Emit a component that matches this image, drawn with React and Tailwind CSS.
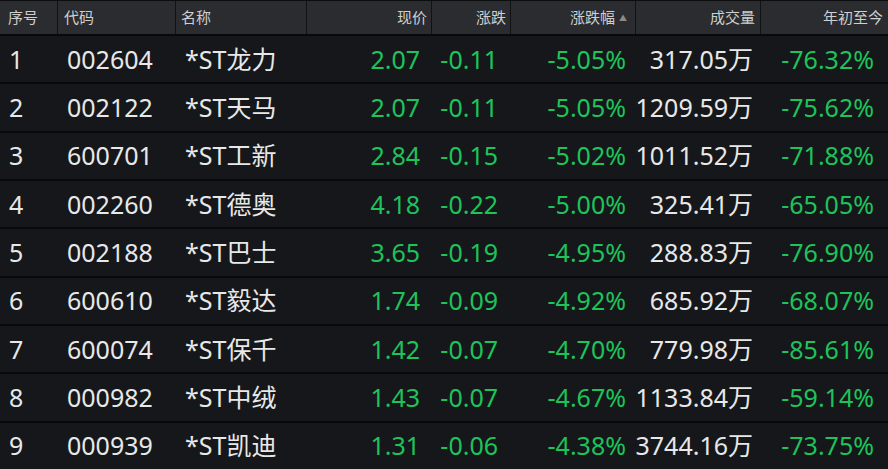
const rows = [
  ["1", "002604", "*ST龙力", "2.07", "-0.11", "-5.05%", "317.05万", "-76.32%"],
  ["2", "002122", "*ST天马", "2.07", "-0.11", "-5.05%", "1209.59万", "-75.62%"],
  ["3", "600701", "*ST工新", "2.84", "-0.15", "-5.02%", "1011.52万", "-71.88%"],
  ["4", "002260", "*ST德奥", "4.18", "-0.22", "-5.00%", "325.41万", "-65.05%"],
  ["5", "002188", "*ST巴士", "3.65", "-0.19", "-4.95%", "288.83万", "-76.90%"],
  ["6", "600610", "*ST毅达", "1.74", "-0.09", "-4.92%", "685.92万", "-68.07%"],
  ["7", "600074", "*ST保千", "1.42", "-0.07", "-4.70%", "779.98万", "-85.61%"],
  ["8", "000982", "*ST中绒", "1.43", "-0.07", "-4.67%", "1133.84万", "-59.14%"],
  ["9", "000939", "*ST凯迪", "1.31", "-0.06", "-4.38%", "3744.16万", "-73.75%"],
]

const font = { fontFamily: '"Noto Sans", "Noto Sans CJK SC", sans-serif' }

export default function App() {
  return (
    <div
      className="w-[888px] h-[469px] bg-[#15171b] flex flex-col overflow-hidden whitespace-nowrap"
      style={font}
    >
      <div className="h-[34px] shrink-0 flex bg-[#2a2c30] border-t border-[#0c0d0f] text-[15px] text-[#cfcfcf]">
        <div className="w-[58px] flex items-center pl-2 border-r border-[#111214]">序号</div>
        <div className="w-[118px] flex items-center pl-[6px] border-r border-[#111214]">代码</div>
        <div className="w-[131px] flex items-center pl-[5px] border-r border-[#111214]">名称</div>
        <div className="w-[125px] flex items-center justify-end pr-1 border-r border-[#111214]">现价</div>
        <div className="w-[79px] flex items-center justify-end pr-1 border-r border-[#111214]">涨跌</div>
        <div className="w-[125px] flex items-center justify-end pr-[8px] gap-[4px] border-r border-[#111214]">
          涨跌幅
          <span className="text-[8px] text-[#8a8a8a]">▲</span>
        </div>
        <div className="w-[125px] flex items-center justify-end pr-[5px] border-r border-[#111214]">成交量</div>
        <div className="flex-1 flex items-center justify-end pr-[5px]">年初至今</div>
      </div>
      {rows.map((r) => (
        <div key={r[0]} className="flex-1 flex border-t-2 border-[#08090a] text-[25px] text-[#e8e8e8] leading-none">
          <div className="w-[58px] flex items-center pl-[9px]">{r[0]}</div>
          <div className="w-[118px] flex items-center pl-[9px]">{r[1]}</div>
          <div className="w-[131px] flex items-center pl-[9px]">{r[2]}</div>
          <div className="w-[125px] flex items-center justify-end pr-[12px] text-[#1ec35a]">{r[3]}</div>
          <div className="w-[79px] flex items-center justify-end pr-[13px] text-[#1ec35a]">{r[4]}</div>
          <div className="w-[125px] flex items-center justify-end pr-[10px] text-[#1ec35a]">{r[5]}</div>
          <div className="w-[125px] flex items-center justify-end pr-[8px]">{r[6]}</div>
          <div className="flex-1 flex items-center justify-end pr-[14px] text-[#1ec35a]">{r[7]}</div>
        </div>
      ))}
    </div>
  )
}
